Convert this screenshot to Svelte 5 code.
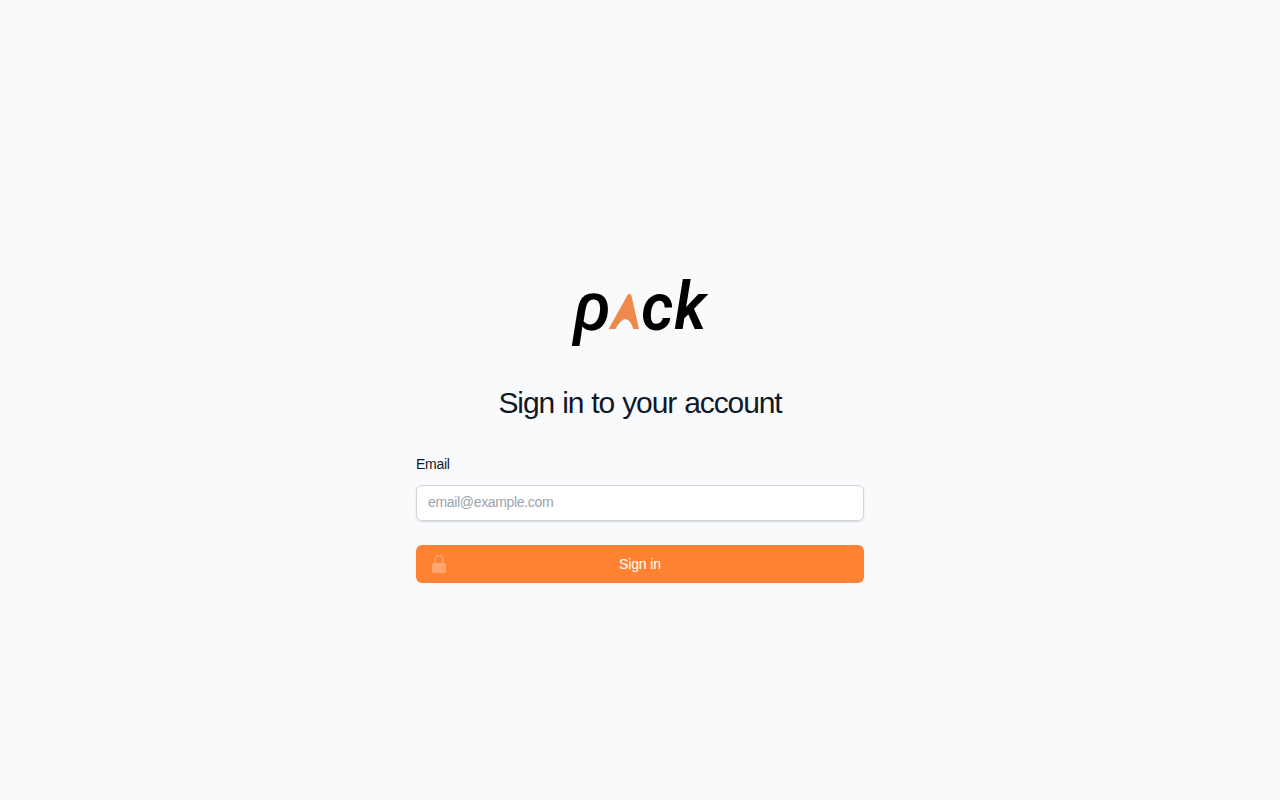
<script>
	let email = '';
</script>

<div class="page">
	<div class="panel">
		<svg class="logo" viewBox="0 0 136 68" role="img" aria-label="pack">
			<text class="letter rho" x="-1.8" y="50.8" font-size="67" textLength="39.5" lengthAdjust="spacingAndGlyphs" transform="skewX(3)">ρ</text>
			<path d="M36.6 50 L55.3 16.5 Q57 14.4 58.8 15.4 L59.5 17 L67 50 H61.3 Q58 40 53.5 40 Q49 40 43.4 50 Z" fill="#f08a4b" />
			<text class="letter" x="69.3" y="50.5" font-size="66" textLength="32" lengthAdjust="spacingAndGlyphs">c</text>
			<text class="letter" x="102.6" y="50" font-size="66" textLength="31.6" lengthAdjust="spacingAndGlyphs">k</text>
		</svg>

		<h2>Sign in to your account</h2>

		<form on:submit|preventDefault>
			<div class="field">
				<label for="email">Email</label>
				<input id="email" type="email" placeholder="email@example.com" bind:value={email} />
			</div>

			<button type="submit">
				<svg class="lock" viewBox="0 0 20 20" fill="currentColor" aria-hidden="true">
					<path
						fill-rule="evenodd"
						clip-rule="evenodd"
						d="M10 1a4.5 4.5 0 00-4.5 4.5V9H5a2 2 0 00-2 2v6a2 2 0 002 2h10a2 2 0 002-2v-6a2 2 0 00-2-2h-.5V5.5A4.5 4.5 0 0010 1zm3 8V5.5a3 3 0 10-6 0V9h6z"
					/>
				</svg>
				<span>Sign in</span>
			</button>
		</form>
	</div>
</div>

<style>
	:global(body) {
		margin: 0;
		background-color: #f9fafc;
	}

	.page {
		display: flex;
		justify-content: center;
		height: 100vh;
		box-sizing: border-box;
		padding-top: 279px;
		font-family: "Liberation Sans", Arial, sans-serif;
		color: #111827;
	}

	.panel {
		width: 448px;
	}

	.logo {
		display: block;
		width: 136px;
		height: 68px;
		margin: 0 auto;
		overflow: visible;
	}

	.letter {
		font-family: Roboto, sans-serif;
		font-style: italic;
		font-weight: 600;
		fill: #000;
	}

	.rho {
		font-family: "Open Sans", sans-serif;
		font-weight: 650;
	}

	h2 {
		margin: 38px 0 0;
		font-size: 30px;
		line-height: 36px;
		font-weight: 400;
		letter-spacing: -1.1px;
		word-spacing: 0.8px;
		text-align: center;
		white-space: nowrap;
	}

	form {
		margin-top: 33px;
	}

	.field {
		border-radius: 6px;
		box-shadow: 0 1px 2px rgba(0, 0, 0, 0.05);
	}

	label {
		display: block;
		font-size: 14px;
		line-height: 21px;
		letter-spacing: -0.3px;
	}

	input {
		display: block;
		width: 100%;
		height: 36px;
		margin-top: 10px;
		padding: 0 11px 2px;
		box-sizing: border-box;
		border: 1px solid #d1d5db;
		border-radius: 6px;
		box-shadow: 0 1px 2px rgba(0, 0, 0, 0.08);
		background-color: #fff;
		font-family: inherit;
		font-size: 14px;
		letter-spacing: -0.33px;
		color: #111827;
	}

	input::placeholder {
		color: #9ca3af;
	}

	button {
		position: relative;
		display: flex;
		align-items: center;
		justify-content: center;
		width: 100%;
		height: 38px;
		margin-top: 24px;
		padding-bottom: 2px;
		border: 0;
		border-radius: 6px;
		background-color: #ff8233;
		color: #fff;
		font-family: inherit;
		font-size: 14px;
		letter-spacing: -0.1px;
	}

	.lock {
		position: absolute;
		left: 13px;
		top: 9px;
		width: 20px;
		height: 20px;
		color: #ffa66f;
	}
</style>
